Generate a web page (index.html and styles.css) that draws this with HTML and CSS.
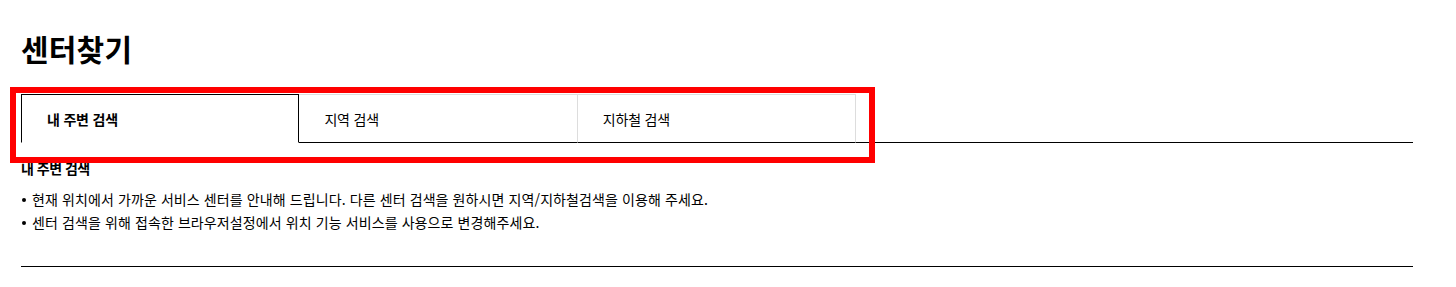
FILE: index.html
```html
<!DOCTYPE html>
<html lang="ko">
<head>
<meta charset="utf-8">
<title>센터찾기</title>
<link rel="stylesheet" href="styles.css">
</head>
<body>
<div class="page">
  <h1 class="title">센터찾기</h1>
  <div class="tabs-wrap">
    <ul class="tabs">
      <li class="tab active">내 주변 검색</li>
      <li class="tab">지역 검색</li>
      <li class="tab">지하철 검색</li>
    </ul>
    <div class="highlight"></div>
  </div>
  <section class="panel">
    <h2 class="panel-title">내 주변 검색</h2>
    <ul class="notes">
      <li>현재 위치에서 가까운 서비스 센터를 안내해 드립니다. 다른 센터 검색을 원하시면 지역/지하철검색을 이용해 주세요.</li>
      <li>센터 검색을 위해 접속한 브라우저설정에서 위치 기능 서비스를 사용으로 변경해주세요.</li>
    </ul>
  </section>
</div>
</body>
</html>
```

FILE: styles.css
```css
* { box-sizing: border-box; }
html, body { margin: 0; padding: 0; background: #fff; }
body {
  font-family: "Noto Sans CJK KR", "Noto Sans", sans-serif;
  color: #000;
}
.page {
  margin: 0 43px 0 21px;
  padding-top: 26px;
}
.title {
  margin: 0;
  font-size: 30px;
  line-height: 44px;
  font-weight: 700;
  letter-spacing: 0.2px;
}
.tabs-wrap {
  position: relative;
  margin-top: 24px;
}
.tabs {
  list-style: none;
  margin: 0;
  padding: 0;
  display: flex;
  border-bottom: 1px solid #000;
}
.tab {
  flex: 0 0 20%;
  height: 49px;
  padding-left: 25px;
  display: flex;
  align-items: center;
  font-size: 14px;
  letter-spacing: -0.2px;
  border-top: 1px solid #ddd;
  border-right: 1px solid #ddd;
  margin-bottom: -1px;
  border-bottom: 1px solid #000;
}
.tab.active {
  font-weight: 700;
  border: 1px solid #000;
  border-bottom: 1px solid #fff;
}
.highlight {
  position: absolute;
  left: -11px;
  top: -7px;
  width: 865px;
  height: 76px;
  border: 6px solid #ff0000;
  pointer-events: none;
}
.panel-title {
  margin: 14px 0 0;
  font-size: 14px;
  line-height: 22px;
  font-weight: 700;
  letter-spacing: -0.5px;
}
.notes {
  list-style: none;
  margin: 9px 0 0;
  padding: 0 0 32px;
  border-bottom: 1px solid #000;
}
.notes li {
  position: relative;
  padding-left: 11px;
  font-size: 14px;
  line-height: 23px;
  letter-spacing: 0.1px;
}
.notes li::before {
  content: "";
  position: absolute;
  left: 1px;
  top: 10px;
  width: 4px;
  height: 4px;
  border-radius: 50%;
  background: #000;
}
```
